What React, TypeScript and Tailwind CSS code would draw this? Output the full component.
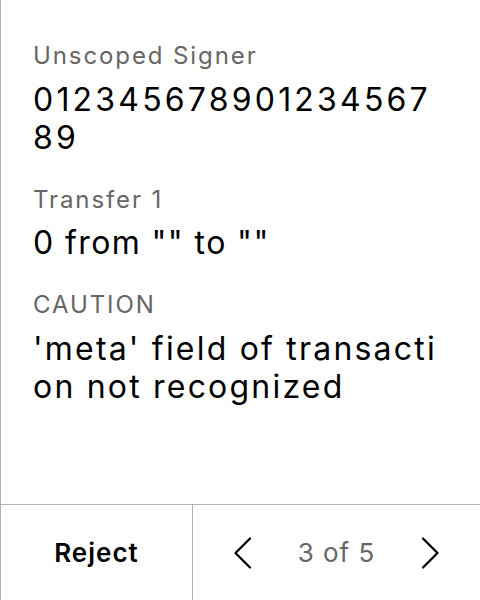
import React from 'react';

interface Field {
    label: string;
    value: string;
    valueClass: string;
}

const fields: Field[] = [
    { label: 'Unscoped Signer', value: '0123456789012345678 9'.replace(' ', ''), valueClass: 'tracking-[3.2px]' },
    { label: 'Transfer 1', value: '0 from "" to ""', valueClass: 'tracking-[1.4px]' },
    { label: 'CAUTION', value: "'meta' field of transaction not recognized", valueClass: 'tracking-[2.2px]' },
];

const ChevronLeft = () => (
    <svg width="18" height="32" viewBox="0 0 18 32" fill="none" stroke="#000" strokeWidth="2.2" strokeLinecap="round" strokeLinejoin="round">
        <polyline points="16,1.5 1.5,16 16,30.5" />
    </svg>
);

const ChevronRight = () => (
    <svg width="18" height="32" viewBox="0 0 18 32" fill="none" stroke="#000" strokeWidth="2.2" strokeLinecap="round" strokeLinejoin="round">
        <polyline points="2,1.5 16.5,16 2,30.5" />
    </svg>
);

export default function App() {
    return (
        <div className="w-[480px] h-[600px] flex flex-col bg-white border-l border-[#b3b3b3] font-['Inter',sans-serif] text-black">
            <div className="flex-1 flex flex-col gap-[28px] pt-[42px] px-[32px]">
                {fields.map(f => (
                    <div key={f.label} className="flex flex-col gap-[10px]">
                        <div className="text-[24px] leading-[1.2] tracking-[1.9px] text-[#666666]">{f.label}</div>
                        <div className={`text-[32px] leading-[1.2] break-all ${f.valueClass}`}>{f.value}</div>
                    </div>
                ))}
            </div>
            <div className="h-[96px] flex border-t border-[#b3b3b3]">
                <button className="w-[192px] border-r border-[#b3b3b3] flex items-center justify-center text-[26px] font-semibold tracking-[1px]">
                    Reject
                </button>
                <div className="flex-1 flex items-center justify-between px-[41px]">
                    <button className="flex items-center"><ChevronLeft /></button>
                    <span className="text-[26px] tracking-[1px] text-[#666666]">3 of 5</span>
                    <button className="flex items-center"><ChevronRight /></button>
                </div>
            </div>
        </div>
    );
}
